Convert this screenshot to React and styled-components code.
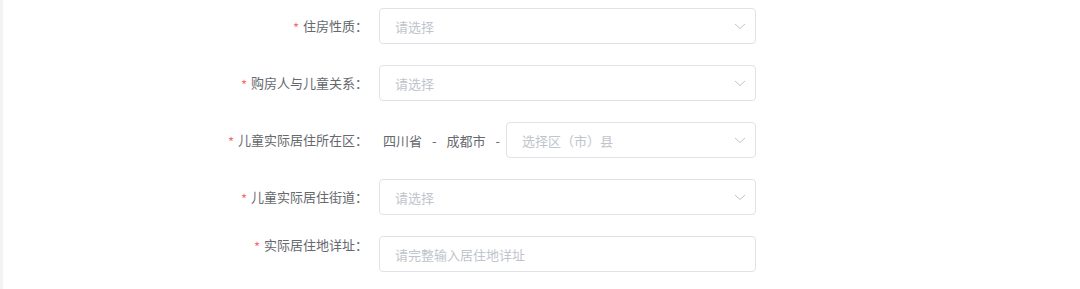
import React from "react";
import styled, { createGlobalStyle } from "styled-components";

const GlobalStyle = createGlobalStyle`
  html, body {
    margin: 0;
    padding: 0;
    background: #ffffff;
  }
  body {
    font-family: "Noto Sans CJK SC", "Microsoft YaHei", sans-serif;
  }
`;

const Page = styled.div`
  min-height: 100vh;
  box-sizing: border-box;
  border-left: 3px solid #f2f3f5;
  padding-top: 8px;
`;

const Form = styled.div`
  display: flex;
  flex-direction: column;
  gap: 21px;
`;

const Row = styled.div`
  display: flex;
  align-items: ${(props) => (props.top ? "flex-start" : "center")};
`;

const Label = styled.label`
  width: 376px;
  height: ${(props) => (props.top ? "auto" : "36px")};
  box-sizing: border-box;
  padding-right: 11px;
  text-align: right;
  font-size: 13px;
  color: #66686d;
  line-height: ${(props) => (props.top ? "18px" : "36px")};
`;

const Star = styled.span`
  color: #f56c6c;
  margin-right: 4px;
  line-height: 1;
  vertical-align: -2px;
`;

const Control = styled.div`
  width: 377px;
  display: flex;
  align-items: center;
`;

const Box = styled.div`
  flex: 1;
  height: 36px;
  box-sizing: border-box;
  border: 1px solid #e0e2e8;
  border-radius: 4px;
  padding: 0 9px 0 15px;
  display: flex;
  align-items: center;
  justify-content: space-between;
  font-size: 13px;
  color: #c0c4cc;
  background: #fff;
`;

const Fixed = styled.span`
  font-size: 13px;
  color: #66686d;
  margin-left: ${(props) => props.ml || 0}px;
`;

const Dash = styled.span`
  font-size: 13px;
  color: #66686d;
  margin: 0 ${(props) => props.mr || 10}px 0 10px;
`;

function Chevron() {
  return (
    <svg width="12" height="7" viewBox="0 0 12 7">
      <polyline
        points="1,1 6,5.5 11,1"
        fill="none"
        stroke="#c0c4cc"
        strokeWidth="1"
      />
    </svg>
  );
}

function Select({ placeholder }) {
  return (
    <Box>
      <span>{placeholder}</span>
      <Chevron />
    </Box>
  );
}

export default function App() {
  return (
    <Page>
      <GlobalStyle />
      <Form>
        <Row>
          <Label>
            <Star>*</Star>住房性质：
          </Label>
          <Control>
            <Select placeholder="请选择" />
          </Control>
        </Row>
        <Row>
          <Label>
            <Star>*</Star>购房人与儿童关系：
          </Label>
          <Control>
            <Select placeholder="请选择" />
          </Control>
        </Row>
        <Row>
          <Label>
            <Star>*</Star>儿童实际居住所在区：
          </Label>
          <Control>
            <Fixed ml={4}>四川省</Fixed>
            <Dash>-</Dash>
            <Fixed>成都市</Fixed>
            <Dash mr={6}>-</Dash>
            <Select placeholder="选择区（市）县" />
          </Control>
        </Row>
        <Row>
          <Label>
            <Star>*</Star>儿童实际居住街道：
          </Label>
          <Control>
            <Select placeholder="请选择" />
          </Control>
        </Row>
        <Row top>
          <Label top>
            <Star>*</Star>实际居住地详址：
          </Label>
          <Control>
            <Box>
              <span>请完整输入居住地详址</span>
            </Box>
          </Control>
        </Row>
      </Form>
    </Page>
  );
}
